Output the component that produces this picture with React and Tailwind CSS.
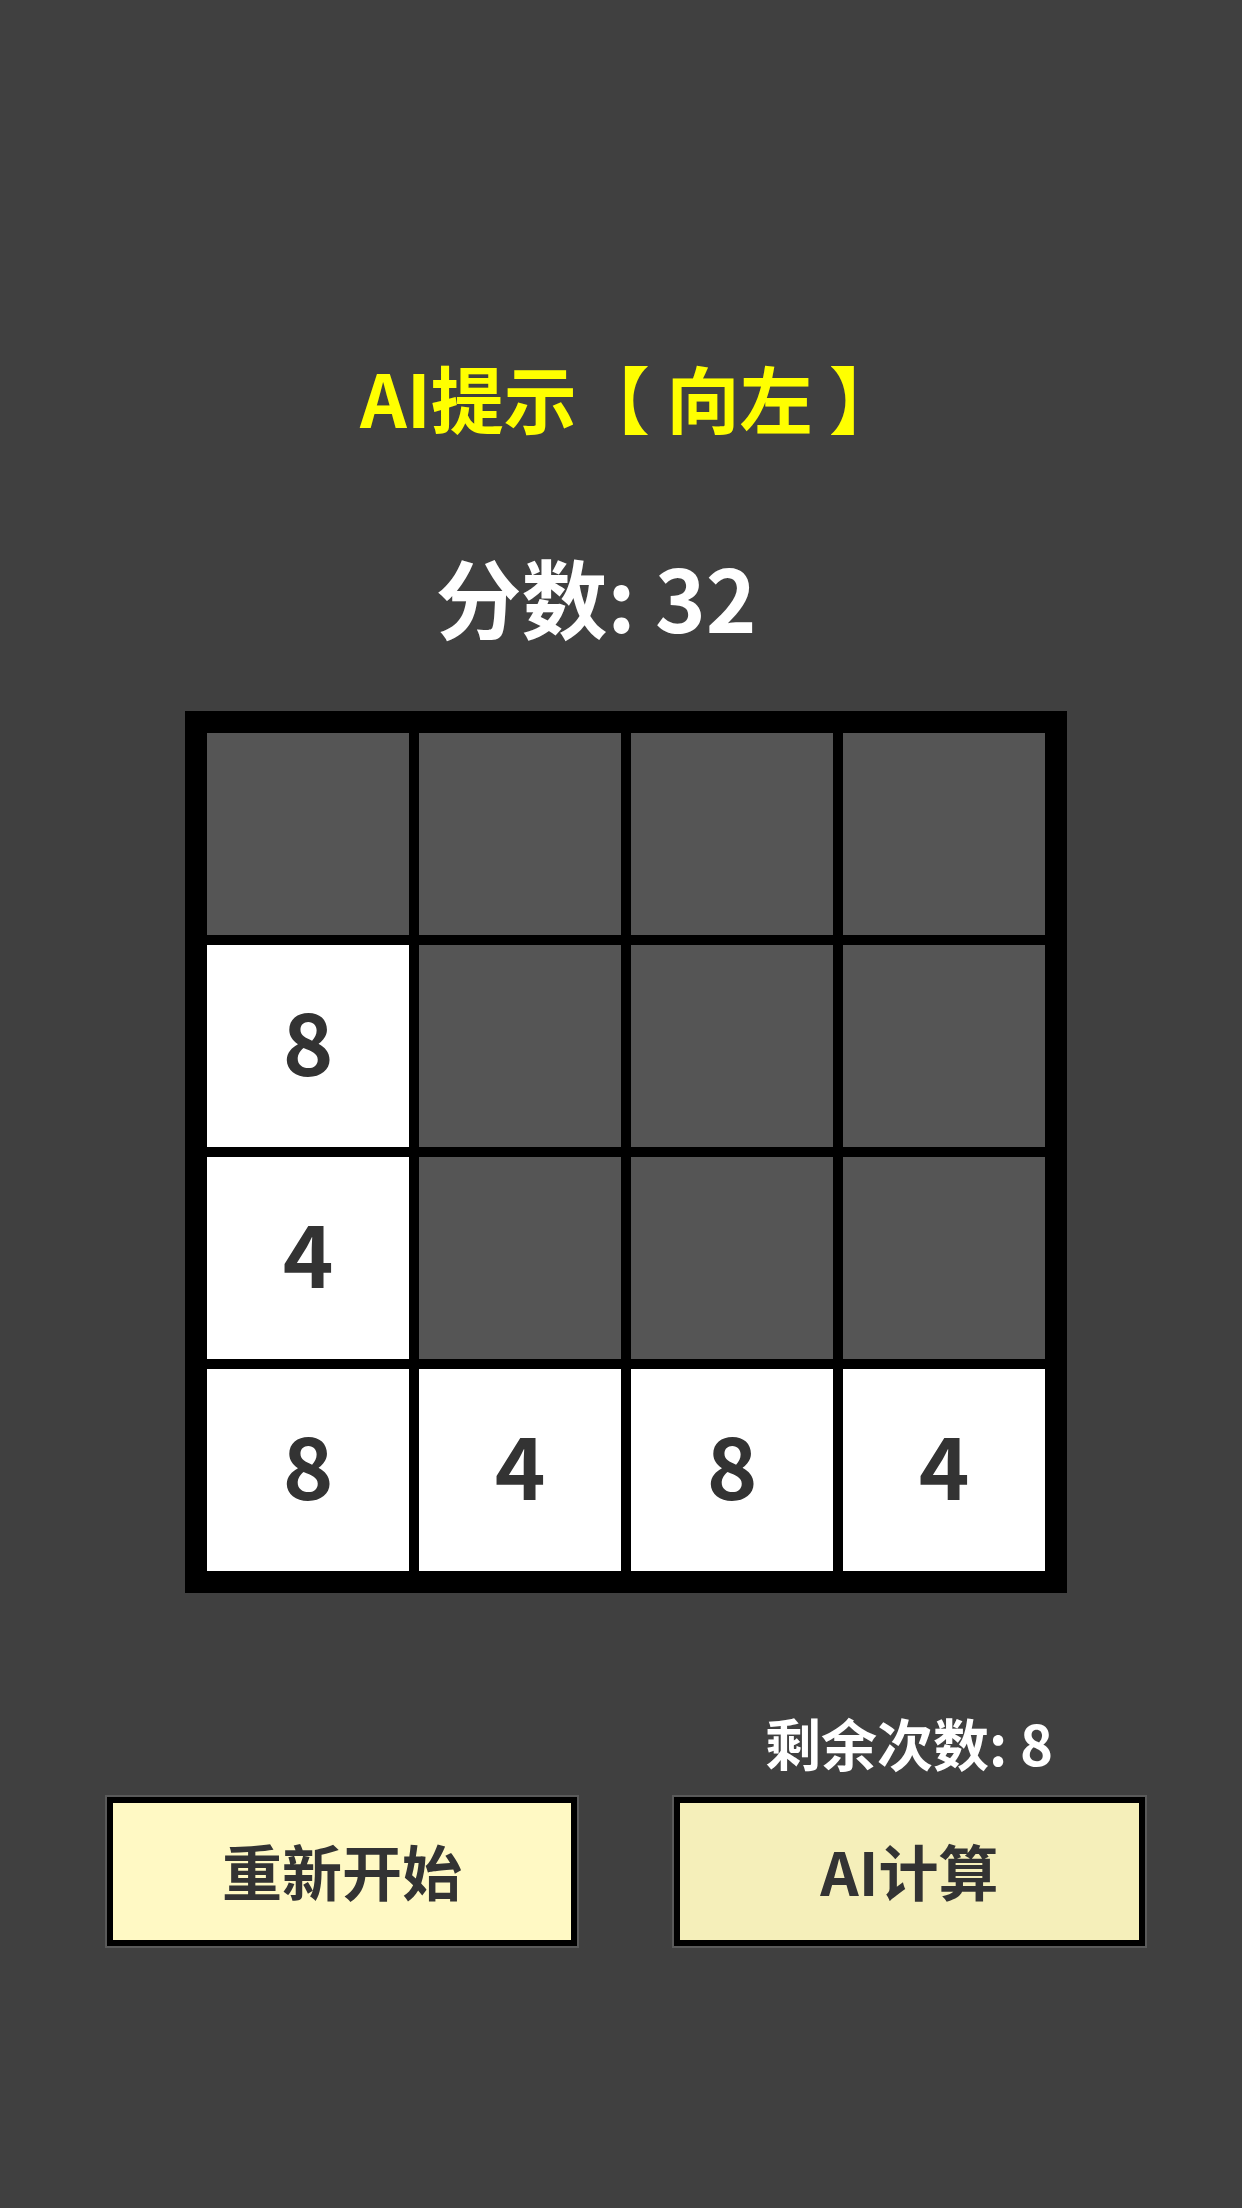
import React from 'react'

const board = [
  [0, 0, 0, 0],
  [8, 0, 0, 0],
  [4, 0, 0, 0],
  [8, 4, 8, 4],
]

const font = { fontFamily: '"Noto Sans CJK SC", "Noto Sans", sans-serif' }

const Tile = ({ value }) => (
  <div
    className={`flex h-[202px] w-[202px] items-center justify-center pb-[14px] text-[86px] font-bold leading-none text-[#333333] ${
      value ? 'bg-white' : 'bg-[#555555]'
    }`}
  >
    {value ? value : ''}
  </div>
)

const App = () => {
  return (
    <div
      className="flex h-[2208px] w-[1242px] flex-col bg-[#404040]"
      style={font}
    >
      <div className="mt-[356px] flex h-[80px] items-center justify-center pl-[20px] text-[73px] font-bold leading-none text-[#ffff00]">
        AI提示【 向左 】
      </div>

      <div className="mt-[120px] flex h-[80px] items-center justify-center pr-[50px] text-[86px] font-bold leading-none text-white">
        分数: 32
      </div>

      <div className="ml-[185px] mt-[75px] grid w-[882px] grid-cols-4 gap-[10px] border-[22px] border-black bg-black">
        {board.flat().map((v, i) => (
          <Tile key={i} value={v} />
        ))}
      </div>

      <div className="mt-[119px] flex pl-[107px]">
        <div className="w-[470px]"></div>
        <div className="ml-[97px] flex h-[60px] w-[470px] items-center justify-center text-[56px] font-bold leading-none text-white">
          剩余次数: 8
        </div>
      </div>

      <div className="mt-[25px] flex gap-[97px] pl-[107px]">
        <button className="flex h-[149px] w-[470px] items-center justify-center border-[6px] border-black bg-[#fff9c4] pb-[4px] text-[60px] font-bold leading-none text-[#333333] shadow-[0_0_0_2px_#5a5a5a]">
          重新开始
        </button>
        <button className="flex h-[149px] w-[471px] items-center justify-center border-[6px] border-black bg-[#f5efba] pb-[4px] text-[60px] font-bold leading-none text-[#333333] shadow-[0_0_0_2px_#5a5a5a]">
          AI计算
        </button>
      </div>
    </div>
  )
}

export default App
